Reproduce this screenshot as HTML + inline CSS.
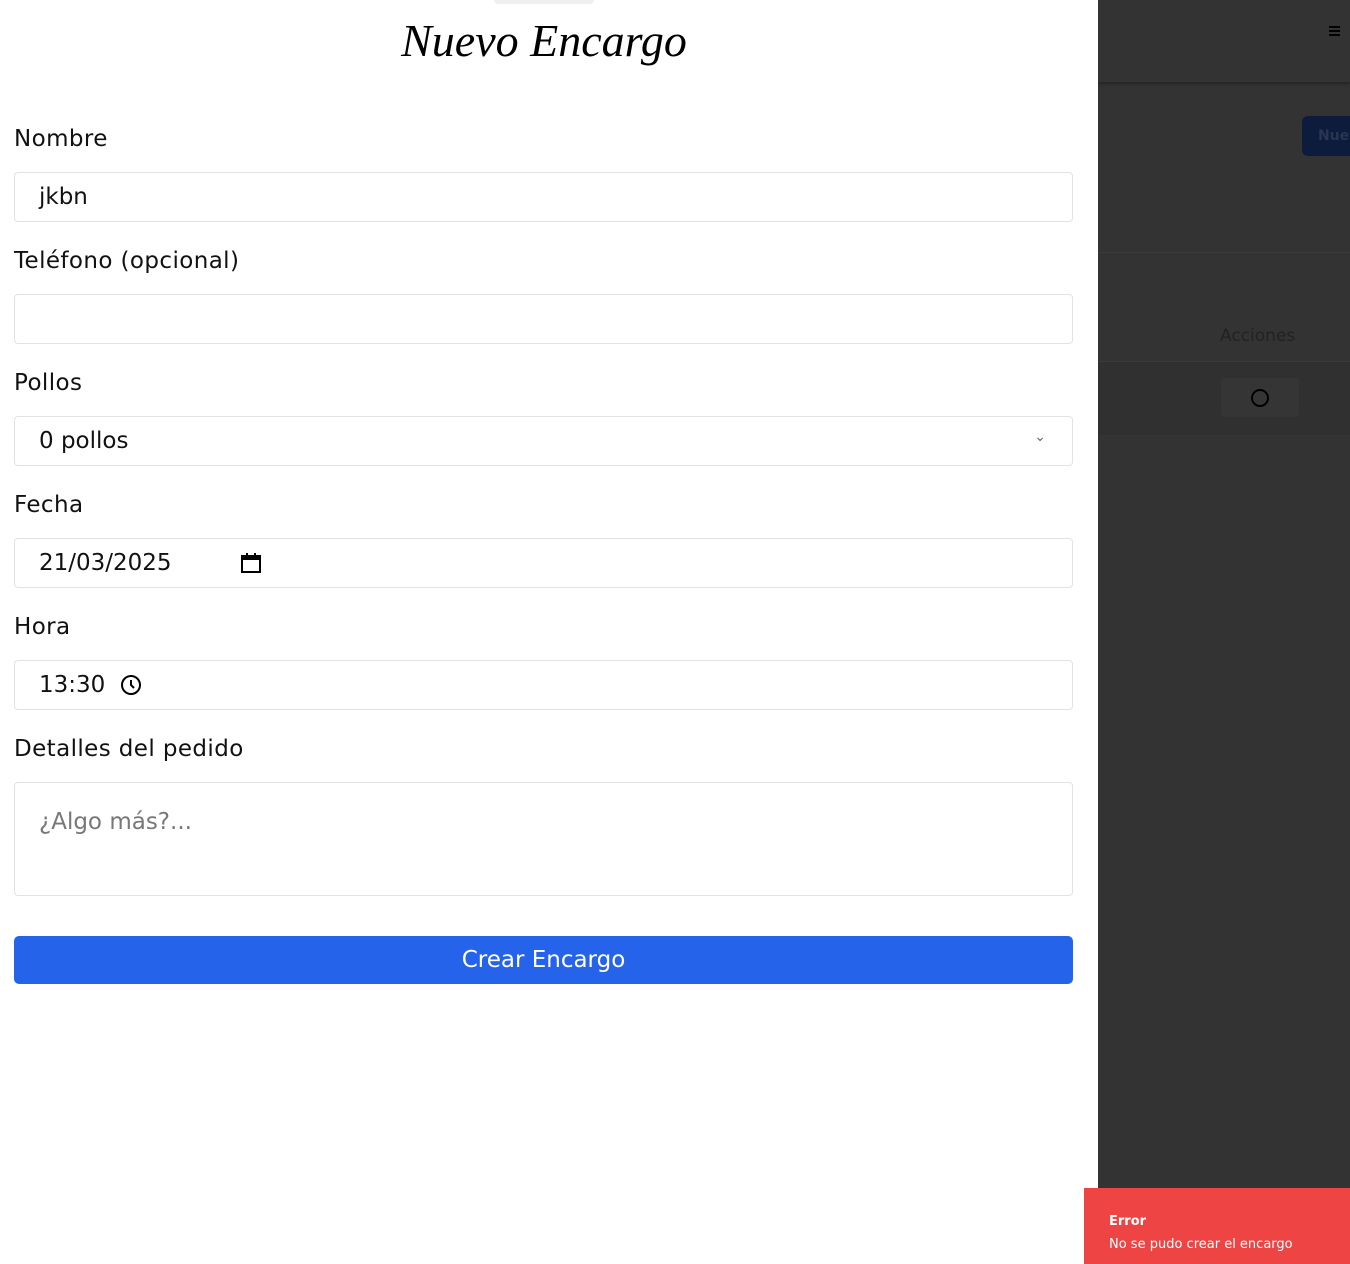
<!DOCTYPE html>
<html><head><meta charset="utf-8"><style>
*{box-sizing:border-box;margin:0;padding:0}
body{width:1350px;height:1264px;overflow:hidden;background:#333;font-family:"DejaVu Sans","Liberation Sans",sans-serif;position:relative}
.panel{position:absolute;left:0;top:0;width:1098px;height:1264px;background:#fff}
.handle{position:absolute;left:494px;top:0;width:100px;height:4px;background:#f0f0f0;border-radius:0 0 4px 4px}
h1{position:absolute;left:0;width:1088px;top:14px;text-align:center;font-family:"URW Chancery L","Z003","Liberation Serif",cursive;font-style:italic;font-weight:400;font-size:46px;color:#000}
label{position:absolute;left:14px;font-size:23px;color:#111;letter-spacing:0.4px}
.in{position:absolute;left:14px;width:1059px;height:50px;border:1px solid #e2e2e2;border-radius:4px;font-size:23px;color:#111;padding:0 24px;display:flex;align-items:center}
.btn{position:absolute;left:14px;top:936px;width:1059px;height:48px;background:#2563eb;border-radius:5px;color:#fff;font-size:23px;text-align:center;line-height:48px}
.toast{position:absolute;left:1084px;top:1188px;width:266px;height:76px;background:#ef4444;color:#fff;font-size:13px;padding:26px 0 0 25px}
</style></head><body>
<div style="position:absolute;left:1098px;top:0;width:252px;height:82px;background:#333;box-shadow:0 2px 3px rgba(0,0,0,.3)"></div>
<div style="position:absolute;left:1329px;top:26px;width:11px;height:10px;border-top:2px solid #000;border-bottom:2px solid #000"><div style="margin-top:2px;height:2px;background:#000"></div></div>
<div style="position:absolute;left:1302px;top:116px;width:60px;height:40px;background:#0d1b3d;border-radius:6px;color:#2a3550;font-weight:bold;font-size:14px;padding:12px 0 0 16px">Nuev</div>
<div style="position:absolute;left:1098px;top:252px;width:252px;height:1px;background:#3a3a3a"></div>
<div style="position:absolute;left:1220px;top:326px;font-size:17px;color:#222">Acciones</div>
<div style="position:absolute;left:1098px;top:361px;width:252px;height:74px;background:#303030;border-top:1px solid #3a3a3a"></div>
<div style="position:absolute;left:1221px;top:378px;width:78px;height:39px;background:#353535;border-radius:4px"></div>
<div style="position:absolute;left:1251px;top:389px;width:18px;height:18px;border:2px solid #000;border-radius:50%"></div>
<div class="panel">
<div class="handle"></div>
<h1>Nuevo Encargo</h1>
<label style="top:126px">Nombre</label>
<div class="in" style="top:172px">jkbn</div>
<label style="top:248px">Teléfono (opcional)</label>
<div class="in" style="top:294px"></div>
<label style="top:370px">Pollos</label>
<div class="in" style="top:416px">0 pollos<span style="position:absolute;right:26px;top:12px;font-size:14px;color:#666">⌄</span></div>
<label style="top:492px">Fecha</label>
<div class="in" style="top:538px">21/03/2025<svg style="position:absolute;left:225px;top:13px" width="22" height="22" viewBox="0 0 22 22"><rect x="2" y="4" width="18" height="16" fill="none" stroke="#000" stroke-width="2"/><rect x="2" y="4" width="18" height="4" fill="#000"/><rect x="6" y="1" width="2" height="4" fill="#000"/><rect x="14" y="1" width="2" height="4" fill="#000"/></svg></div>
<label style="top:614px">Hora</label>
<div class="in" style="top:660px">13:30<svg style="position:absolute;left:105px;top:13px" width="22" height="22" viewBox="0 0 22 22"><circle cx="11" cy="11" r="9" fill="none" stroke="#000" stroke-width="2"/><path d="M11 6v5l3 3" fill="none" stroke="#000" stroke-width="2"/></svg></div>
<label style="top:736px">Detalles del pedido</label>
<div class="in" style="top:782px;height:114px;align-items:flex-start;padding-top:26px;color:#777">¿Algo más?...</div>
<div class="btn">Crear Encargo</div>
</div>
<div class="toast"><b>Error</b><div style="margin-top:8px">No se pudo crear el encargo</div></div>
</body></html>
